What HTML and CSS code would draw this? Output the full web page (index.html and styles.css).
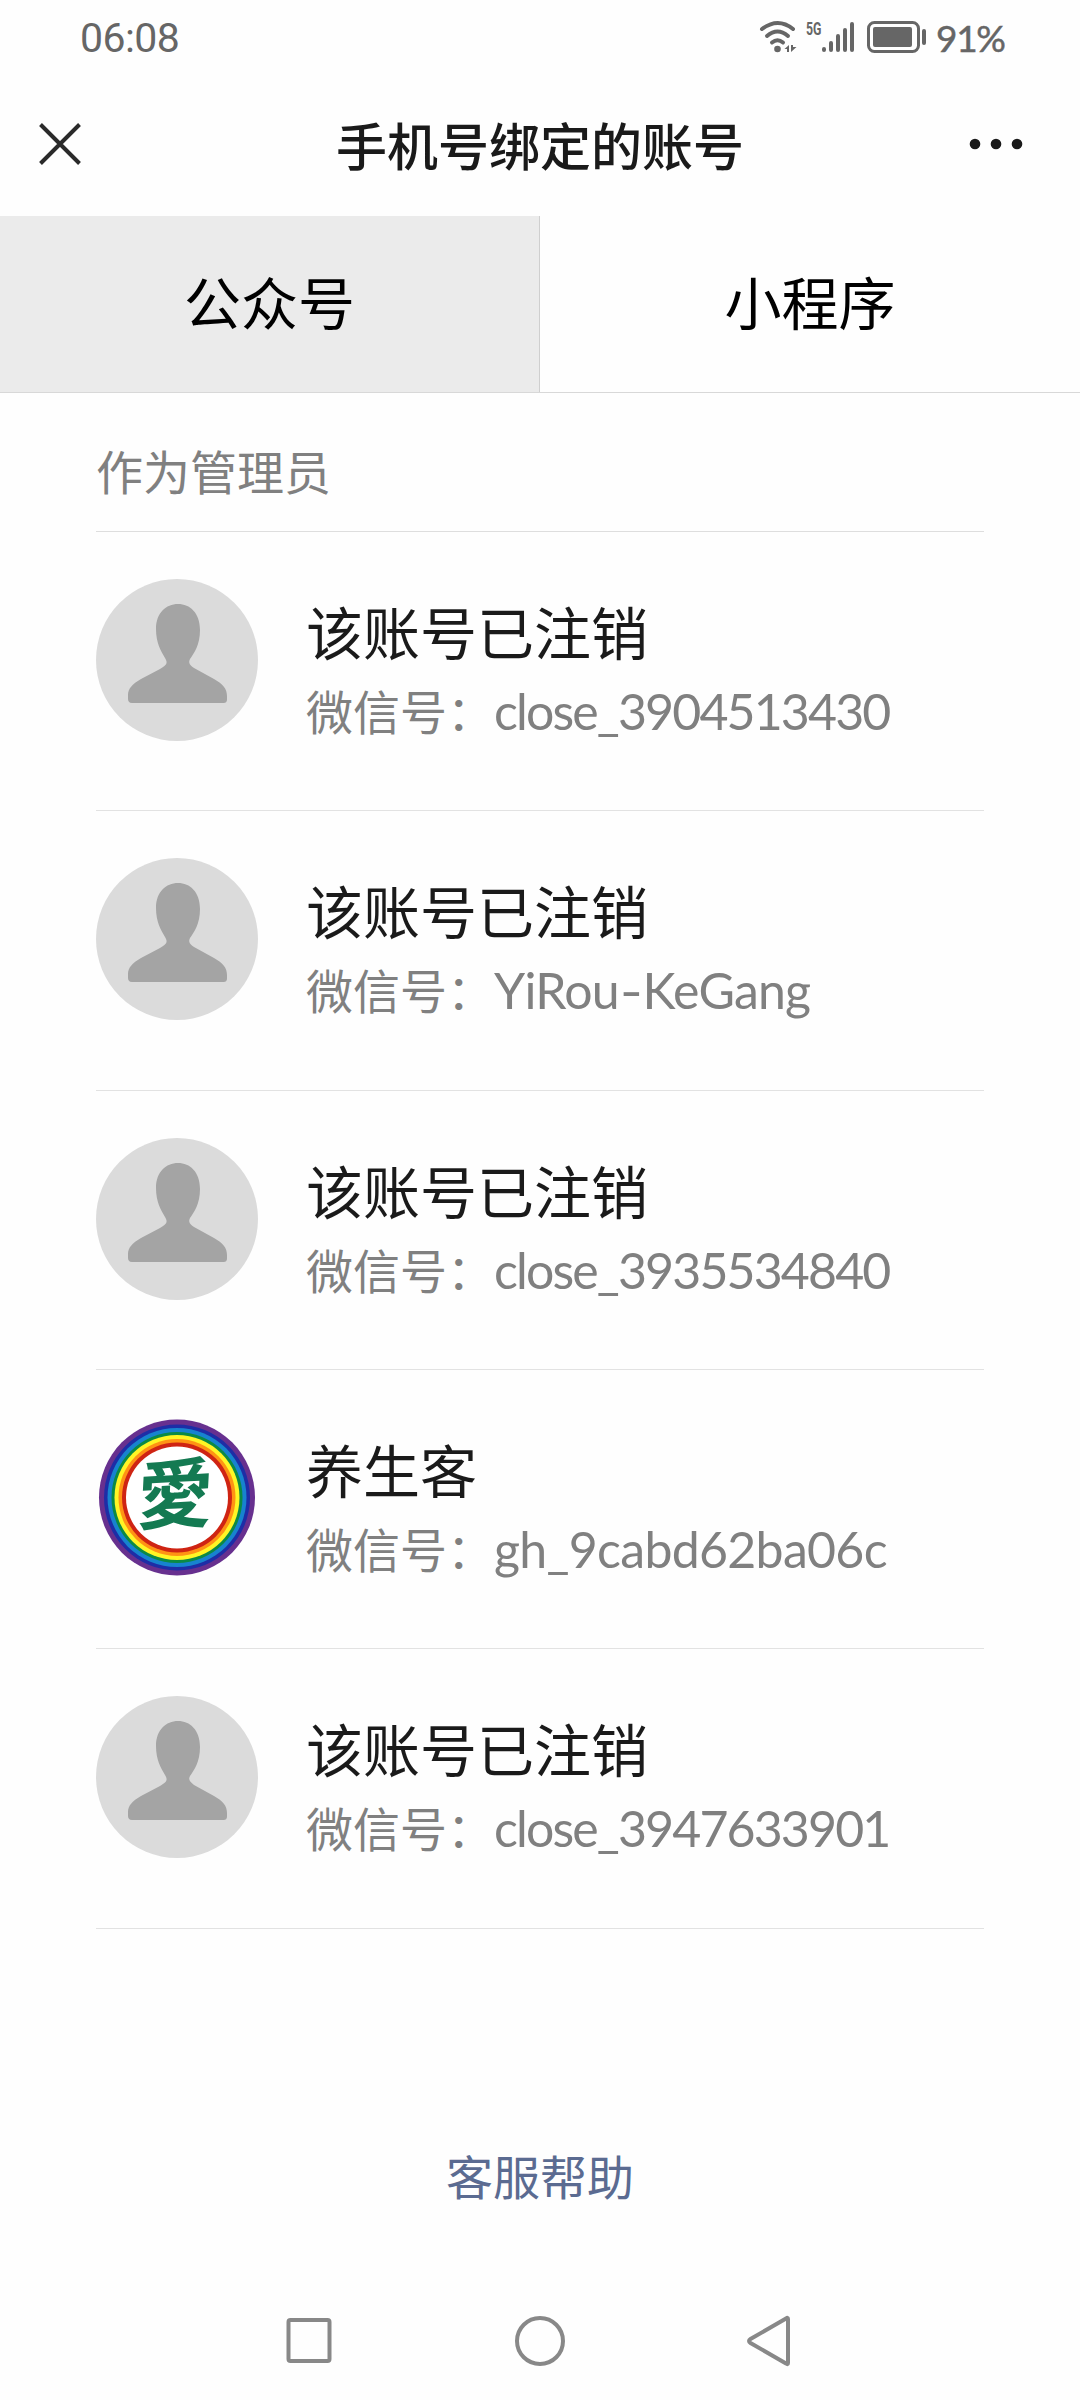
FILE: index.html
```html
<!DOCTYPE html>
<html lang="zh-CN">
<head>
<meta charset="utf-8">
<title>手机号绑定的账号</title>
<link rel="stylesheet" href="styles.css">
</head>
<body>
<svg class="defs" width="0" height="0" aria-hidden="true">
  <symbol id="person" viewBox="0 0 162 162">
    <circle cx="81" cy="81" r="81" fill="#dbdbdb"/>
    <path d="M82 25C94 25 104 34 104 51C104 66 98 74 94 80C92 84 94 86 98 89L118 100C127 105 131 110 131 117V120C131 123 130 124 127 124H36C33 124 32 122 32 120V116C32 110 36 105 45 100L64 90C71 86 72 84 69 79C65 72 60 64 60 50C60 34 70 25 82 25Z" fill="#a4a4a4"/>
  </symbol>
</svg>
<div class="screen">
  <header class="status">
    <span class="time">06:08</span>
    <div class="indicators">
      <svg class="signal" width="102" height="34" viewBox="0 0 102 34">
        <g fill="none" stroke="#666" stroke-width="4" stroke-linecap="round">
          <path d="M3 10Q19 -2 34 10"/><path d="M8 17Q18.500 8 29 17"/><path d="M13 23.500Q18.500 19 24 23.500"/>
        </g>
        <circle cx="18.500" cy="30" r="3.300" fill="#666"/>
        <path d="M30 26V33H28V30H25.500Z M32 33V26H34V28H37.500Z" fill="#666"/>
        <text class="g5" x="47" y="16" textLength="15.500" lengthAdjust="spacingAndGlyphs">5G</text>
        <g stroke="#666" stroke-width="4" stroke-linecap="round">
          <path d="M65 30V31M72 24V31M79 17V31M86 11V31M93 5V31"/>
        </g>
      </svg>
      <svg class="battery" width="60" height="34" viewBox="0 0 60 34">
        <rect x="1.500" y="3.500" width="50" height="29" rx="6" fill="none" stroke="#666" stroke-width="3"/>
        <rect x="6" y="8" width="39" height="20" rx="2" fill="#666"/>
        <path d="M57 12V24" stroke="#666" stroke-width="4" stroke-linecap="round"/>
      </svg>
      <span class="percent">91%</span>
    </div>
  </header>
  <div class="titlebar">
    <svg width="44" height="44" viewBox="0 0 44 44"><path d="M2.500 2.500L41.500 41.500M41.500 2.500L2.500 41.500" stroke="#2a2a2a" stroke-width="4"/></svg>
    <h1>手机号绑定的账号</h1>
    <svg width="54" height="12" viewBox="0 0 54 12" fill="#1a1a1a"><circle cx="6" cy="6" r="5.300"/><circle cx="27" cy="6" r="5.300"/><circle cx="48" cy="6" r="5.300"/></svg>
  </div>
  <nav class="tabs">
    <div class="tab active">公众号</div>
    <div class="tab">小程序</div>
  </nav>
  <main class="list">
    <h2>作为管理员</h2>
    <section class="account">
      <svg class="avatar"><use href="#person"/></svg>
      <div class="info"><div class="name">该账号已注销</div><div class="wxid"><span>微信号：</span><span class="id">close_3904513430</span></div></div>
    </section>
    <section class="account">
      <svg class="avatar"><use href="#person"/></svg>
      <div class="info"><div class="name">该账号已注销</div><div class="wxid"><span>微信号：</span><span class="id words">YiRou<span class="dash">-</span>KeGang</span></div></div>
    </section>
    <section class="account">
      <svg class="avatar"><use href="#person"/></svg>
      <div class="info"><div class="name">该账号已注销</div><div class="wxid"><span>微信号：</span><span class="id">close_3935534840</span></div></div>
    </section>
    <section class="account">
      <svg class="avatar" viewBox="0 0 162 162">
        <circle cx="81" cy="80.500" r="78" fill="#67308f"/><circle cx="81" cy="80.500" r="73" fill="#1e2da6"/>
        <circle cx="81" cy="80.500" r="69.500" fill="#1783cf"/><circle cx="81" cy="80.500" r="65.500" fill="#0b8a45"/>
        <circle cx="81" cy="80.500" r="62.500" fill="#fff525"/><circle cx="81" cy="80.500" r="58.500" fill="#ff9314"/>
        <circle cx="81" cy="80.500" r="55" fill="#cf2413"/><circle cx="81" cy="80.500" r="51" fill="#fff"/>
        <text class="love" x="0" y="27" text-anchor="middle" transform="translate(79 78) rotate(-3) skewX(-6)">愛</text>
      </svg>
      <div class="info"><div class="name">养生客</div><div class="wxid"><span>微信号：</span><span class="id mixed">gh_9cabd62ba06c</span></div></div>
    </section>
    <section class="account">
      <svg class="avatar"><use href="#person"/></svg>
      <div class="info"><div class="name">该账号已注销</div><div class="wxid"><span>微信号：</span><span class="id">close_3947633901</span></div></div>
    </section>
  </main>
  <a class="help">客服帮助</a>
  <footer class="sysnav">
    <svg width="52" height="52" viewBox="0 0 52 52"><rect x="6.500" y="5" width="41" height="41" rx="2"/></svg>
    <svg width="52" height="52" viewBox="0 0 52 52"><circle cx="26" cy="26" r="23"/></svg>
    <svg width="52" height="52" viewBox="0 0 52 52"><path d="M42 4V48Q42 50 40 48.500L4.500 28Q1.500 26 4.500 24L40 3.500Q42 2 42 4Z"/></svg>
  </footer>
</div>
</body>
</html>
```
FILE: styles.css
```css
* { box-sizing: border-box; }
body { margin: 0; background: #fefefe; font-family: "Noto Sans CJK SC", sans-serif; color: #1a1a1a; }
.defs { display: block; height: 0; }
svg { display: block; flex: none; }
.screen { width: 1080px; height: 2400px; display: flex; flex-direction: column; }

.status { height: 76px; padding: 0 75px 0 80px; display: flex; justify-content: space-between; color: #666; font-family: Lato, sans-serif; }
.time { font-family: Roboto, sans-serif; font-size: 41px; line-height: 77px; letter-spacing: -0.6px; }
.indicators { display: flex; }
.signal { margin: 19px 6px 0 0; }
.battery { margin: 19px 9px 0 0; }
.percent { width: 69px; font-size: 37px; line-height: 76px; letter-spacing: -1.3px; -webkit-text-stroke: 0.5px #666; }
.g5 { font: 700 18px Roboto, sans-serif; fill: #666; }

.titlebar { height: 140px; padding: 0 57px 4px 38px; display: flex; align-items: center; justify-content: space-between; }
.titlebar h1 { margin: 0 0 0 29px; font-size: 51px; font-weight: 500; line-height: 60px; }

.tabs { height: 177px; display: grid; grid-template-columns: 1fr 1fr; border-bottom: 1px solid #d8d8d8; }
.tab { display: flex; align-items: center; justify-content: center; padding-bottom: 9px; font-size: 57px; color: #000; }
.tab.active { background: #ebebeb; border-right: 1px solid #cfcfcf; }

.list { margin: 0 96px; width: 888px; }
.list h2 { margin: 0; height: 139px; padding-top: 42px; font-size: 47px; font-weight: 400; line-height: 70px; color: #808080; border-bottom: 1px solid #dedede; }
.account { height: 279.35px; padding-top: 47px; display: flex; gap: 48px; border-bottom: 1px solid #e2e2e2; }
.avatar { width: 162px; height: 162px; }
.name { margin-top: 11px; font-size: 57px; line-height: 80px; }
.wxid { display: flex; font-size: 47px; line-height: 79px; color: #808080; }
.id { padding-top: 2px; font-family: Lato, sans-serif; font-size: 50px; letter-spacing: -1.85px; }
.id.words { letter-spacing: -0.8px; }
.id.mixed { letter-spacing: -0.7px; }
.dash { display: inline-block; margin: 0 3px; transform: scaleX(1.25); }
.love { font: 700 76px "Noto Sans CJK TC", sans-serif; fill: #147a52; }

.help { margin-top: 211px; text-align: center; font-size: 47px; line-height: 70px; color: #5b6b91; }
.sysnav { margin: 105px 0 0 282px; display: flex; gap: 180px; fill: none; stroke: #888; stroke-width: 4; }
```
